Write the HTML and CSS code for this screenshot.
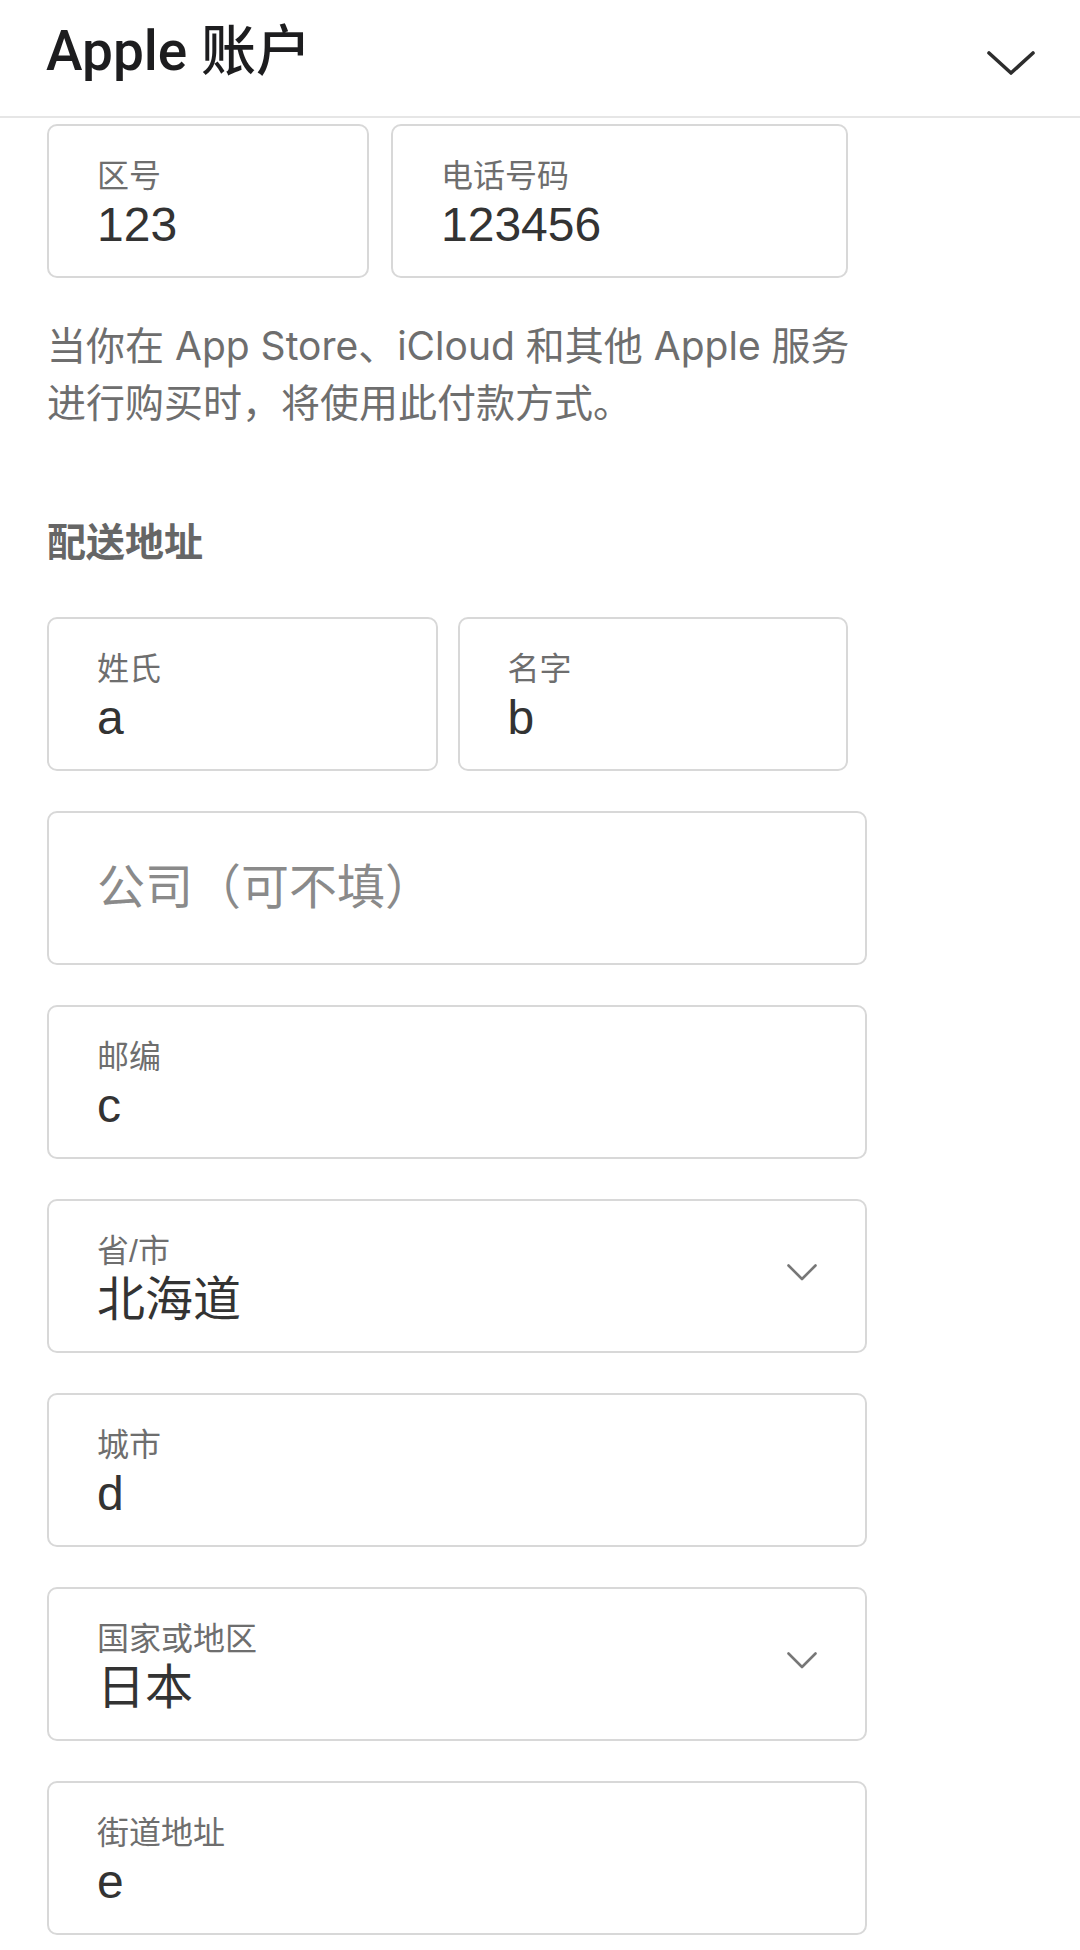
FILE: index.html
```html
<!DOCTYPE html>
<html lang="zh-CN">
<head>
<meta charset="utf-8">
<title>Apple 账户</title>
<link rel="stylesheet" href="styles.css">
</head>
<body>
<header class="topbar">
  <h1 class="title">Apple 账户</h1>
  <svg class="top-chevron" width="48" height="24" viewBox="0 0 48 24" aria-hidden="true">
    <polyline points="2,2 24,22 46,2" fill="none" stroke="#2d2d2d" stroke-width="3.6" stroke-linecap="round" stroke-linejoin="round"/>
  </svg>
</header>
<main class="content">
  <div class="row row-phone">
    <div class="field">
      <div class="label">区号</div>
      <div class="value">123</div>
    </div>
    <div class="field">
      <div class="label">电话号码</div>
      <div class="value">123456</div>
    </div>
  </div>

  <p class="note">当你在 App Store、iCloud 和其他 Apple 服务<br>进行购买时，将使用此付款方式。</p>

  <h2 class="section-title">配送地址</h2>

  <div class="form">
    <div class="row row-name">
      <div class="field">
        <div class="label">姓氏</div>
        <div class="value">a</div>
      </div>
      <div class="field">
        <div class="label">名字</div>
        <div class="value">b</div>
      </div>
    </div>

    <div class="field field-empty">
      <div class="placeholder">公司（可不填）</div>
    </div>

    <div class="field">
      <div class="label">邮编</div>
      <div class="value">c</div>
    </div>

    <div class="field field-select">
      <div class="select-text">
        <div class="label">省/市</div>
        <div class="value">北海道</div>
      </div>
      <svg class="select-chevron" width="30" height="17" viewBox="0 0 30 17" aria-hidden="true">
        <polyline points="1.5,1.5 15,15 28.5,1.5" fill="none" stroke="#777777" stroke-width="2.6" stroke-linecap="round" stroke-linejoin="round"/>
      </svg>
    </div>

    <div class="field">
      <div class="label">城市</div>
      <div class="value">d</div>
    </div>

    <div class="field field-select">
      <div class="select-text">
        <div class="label">国家或地区</div>
        <div class="value">日本</div>
      </div>
      <svg class="select-chevron" width="30" height="17" viewBox="0 0 30 17" aria-hidden="true">
        <polyline points="1.5,1.5 15,15 28.5,1.5" fill="none" stroke="#777777" stroke-width="2.6" stroke-linecap="round" stroke-linejoin="round"/>
      </svg>
    </div>

    <div class="field">
      <div class="label">街道地址</div>
      <div class="value">e</div>
    </div>
  </div>
</main>
</body>
</html>
```

FILE: styles.css
```css
* {
  box-sizing: border-box;
}

html, body {
  margin: 0;
  padding: 0;
  background: #ffffff;
}

body {
  font-family: "Liberation Sans", "Noto Sans CJK SC", sans-serif;
  color: #333333;
}

.topbar {
  display: flex;
  justify-content: space-between;
  align-items: flex-start;
  height: 118px;
  padding: 16px 45px 0 46px;
  border-bottom: 2px solid #e6e6e6;
}

.title {
  margin: 0;
  font-family: Roboto, "Noto Sans CJK SC", sans-serif;
  font-size: 55px;
  line-height: 70px;
  font-weight: 500;
  color: #1d1d1f;
}

.top-chevron {
  margin-top: 35px;
  display: block;
}

.content {
  padding: 6px 0 0 47px;
}

.row {
  display: grid;
  width: 801px;
}

.row-phone {
  grid-template-columns: 322px 1fr;
  column-gap: 22px;
}

.row-name {
  grid-template-columns: 1fr 1fr;
  column-gap: 20px;
}

.field {
  height: 154px;
  width: 820px;
  border: 2px solid #d8d8d8;
  border-radius: 10px;
  padding: 30px 48px 0 48px;
  background: #ffffff;
}

.row .field {
  width: auto;
}

.label {
  font-size: 32px;
  line-height: 40px;
  color: #6e6e6e;
  white-space: nowrap;
}

.value {
  font-size: 48px;
  line-height: 58px;
  color: #333333;
  white-space: nowrap;
}

.field-empty {
  display: flex;
  align-items: center;
  padding-top: 0;
}

.placeholder {
  font-size: 48px;
  line-height: 58px;
  color: #8a8a8a;
  white-space: nowrap;
}

.field-select {
  display: flex;
  align-items: flex-start;
  padding-right: 48px;
}

.select-text {
  flex: 1;
}

.select-chevron {
  display: block;
  margin-top: 33px;
}

.note {
  margin: 39px 0 0 0;
  font-family: Inter, "Noto Sans CJK SC", sans-serif;
  font-size: 39px;
  line-height: 57px;
  color: #6e6e6e;
  white-space: nowrap;
}

.section-title {
  margin: 88px 0 0 0;
  font-size: 39px;
  line-height: 48px;
  font-weight: 700;
  color: #666666;
}

.form {
  display: flex;
  flex-direction: column;
  gap: 40px;
  margin-top: 50px;
}
```
